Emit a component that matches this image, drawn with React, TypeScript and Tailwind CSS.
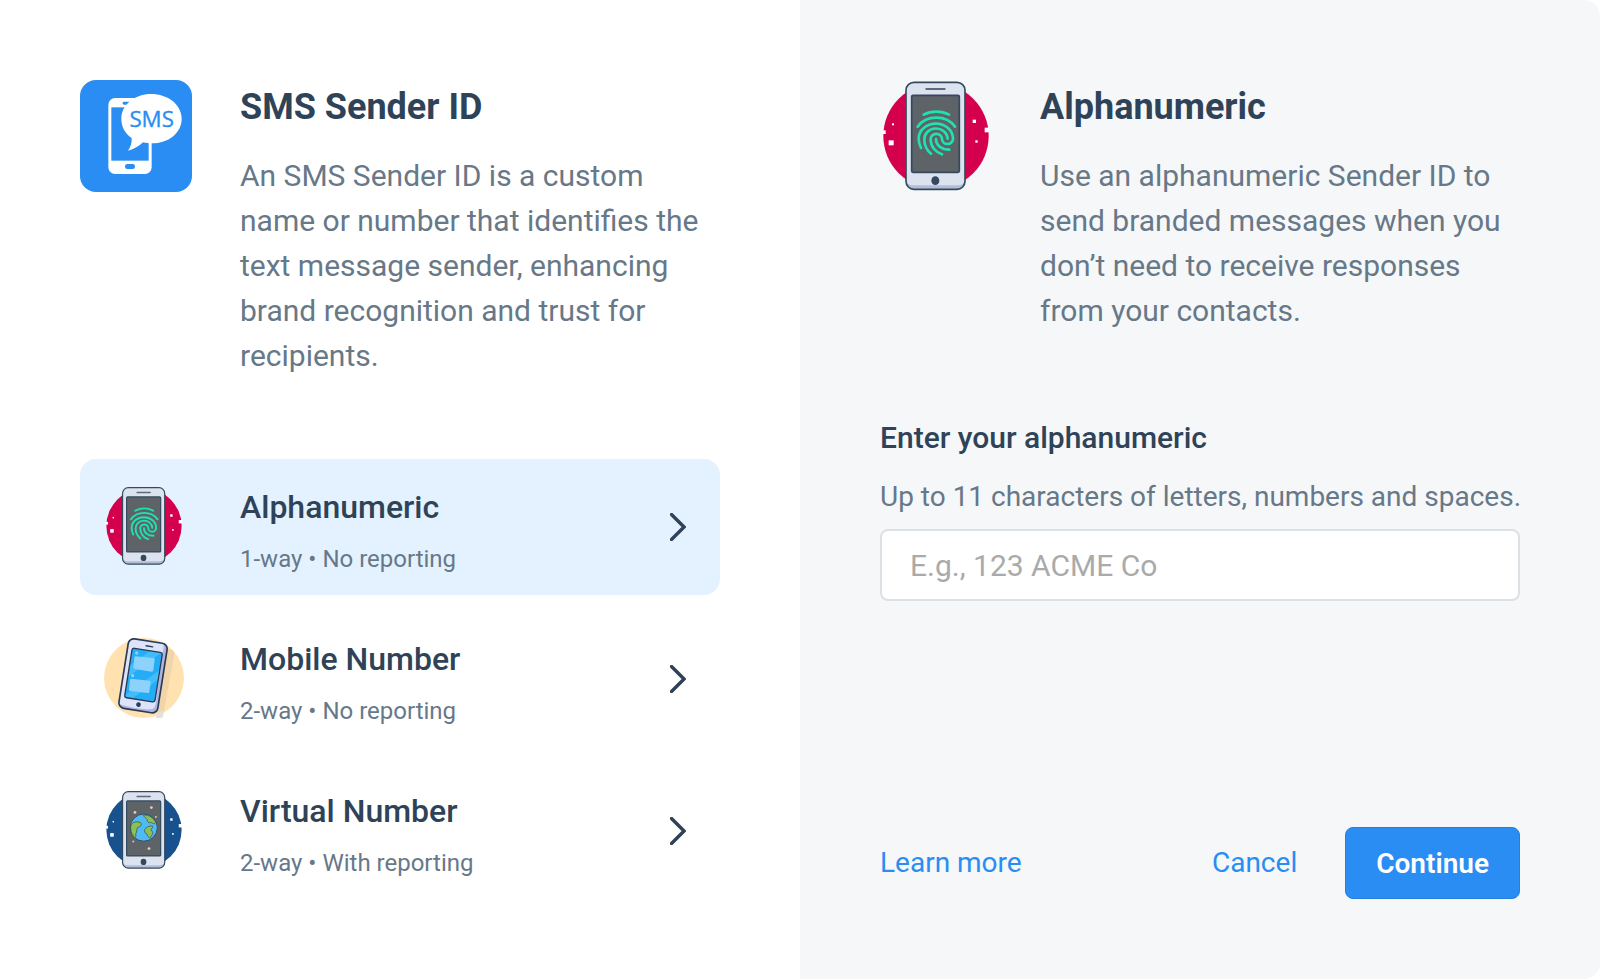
import React, { useState } from "react";

interface SenderType {
  id: string;
  title: string;
  details: string;
  Icon: React.ComponentType<{ className?: string }>;
}

interface IconProps {
  className?: string;
}

const SmsIcon = ({ className }: IconProps) => (
  <svg viewBox="30 30 336 336" className={className} aria-hidden="true">
    <rect x="30" y="30" width="336" height="336" rx="48" fill="#298df3" />
    <rect x="115" y="84" width="130" height="228" rx="20" fill="#fff" />
    <rect x="124" y="112" width="112" height="160" fill="#298df3" />
    <rect x="158" y="95" width="44" height="9" rx="4" fill="#298df3" />
    <rect x="165" y="282" width="30" height="15" rx="7" fill="#298df3" />
    <path
      d="M243 72C294 72 335 104 335 146C335 189 295 220 246 220C236 220 228 219 219 217C207 229 192 237 174 242C182 230 186 219 185 204C165 191 154 170 154 147C154 104 194 72 243 72Z"
      fill="#fff"
    />
    <text
      x="245"
      y="171"
      textAnchor="middle"
      fontSize="67"
      fill="#298df3"
      stroke="#298df3"
      strokeWidth="1"
      className="font-['Open_Sans',sans-serif]"
    >
      SMS
    </text>
  </svg>
);

const PhoneFrame = ({
  color,
  className,
  children,
}: IconProps & { color: string; children: React.ReactNode }) => (
  <svg viewBox="30 30 336 336" className={className} aria-hidden="true">
    <circle cx="198" cy="198" r="158" fill={color} />
    <g fill="#fff">
      <rect x="36" y="181" width="11" height="11" />
      <rect x="66" y="160" width="6" height="6" />
      <rect x="56" y="211" width="15" height="15" />
      <rect x="308" y="149" width="10" height="10" />
      <rect x="344" y="173" width="14" height="14" />
      <rect x="316" y="211" width="7" height="7" />
    </g>
    <rect x="108" y="37" width="177" height="321" rx="24" fill="#dce3ef" />
    <path
      d="M108 328C108 340 118 346 132 346H261C275 346 285 340 285 328V334C285 348 275 358 261 358H132C118 358 108 348 108 334Z"
      fill="#b4bdd8"
    />
    <rect
      x="108"
      y="37"
      width="177"
      height="321"
      rx="24"
      fill="none"
      stroke="#34495e"
      strokeWidth="5"
    />
    <path d="M169 57H224" stroke="#5d6a7c" strokeWidth="6" strokeLinecap="round" />
    <rect
      x="125"
      y="76"
      width="143"
      height="231"
      rx="4"
      fill="#5e6368"
      stroke="#34495e"
      strokeWidth="5"
    />
    <ellipse cx="196" cy="332" rx="12" ry="13" fill="#34495e" />
    {children}
  </svg>
);

const AlphanumericIcon = ({ className }: IconProps) => (
  <PhoneFrame color="#d5004d" className={className}>
    <g fill="none" stroke="#20e2b0" strokeWidth="8" strokeLinecap="round">
      <path d="M161 134C184 122 214 122 237 134" />
      <path d="M143 170C169 134 229 134 255 170" />
      <path d="M153 234C148 223 146 214 146 206A51.5 45 0 0 1 249 206A16.5 16 0 0 1 216 206A17 16 0 0 0 182 209C182 230 198 248 216 253" />
      <path d="M183 251C168 238 163 224 163 209A35 32 0 0 1 233 206" />
      <path d="M198 207C198 226 215 239 238 239" />
    </g>
  </PhoneFrame>
);

const VirtualNumberIcon = ({ className }: IconProps) => (
  <PhoneFrame color="#17528f" className={className}>
    <circle cx="197" cy="188" r="57" fill="#4fbaf5" stroke="#34495e" strokeWidth="4" />
    <g fill="#8cc152" stroke="#34495e" strokeWidth="3" strokeLinejoin="round">
      <path d="M143 178C150 164 168 160 183 167C191 174 185 185 172 187C164 194 171 206 163 214C166 226 161 233 156 228C144 214 140 196 143 178Z" />
      <path d="M196 135C217 133 240 148 247 166C242 175 234 171 228 166C218 170 208 163 213 155C208 148 198 145 196 135Z" />
      <path d="M200 200C204 186 220 179 235 182C236 189 226 193 228 200C239 204 235 220 222 232C211 228 214 212 202 209Z" />
    </g>
    <g fill="#d9cfc6">
      <circle cx="160" cy="124" r="6" />
      <circle cx="229" cy="104" r="6" />
      <circle cx="248" cy="143" r="4" />
      <circle cx="153" cy="246" r="4" />
      <circle cx="219" cy="276" r="6" />
    </g>
  </PhoneFrame>
);

const MobileNumberIcon = ({ className }: IconProps) => (
  <svg viewBox="27 39 240 240" className={className} aria-hidden="true">
    <circle cx="147" cy="159" r="120" fill="#ffe2af" />
    <path d="M216 70L232 76C238 78 239 83 238 88L207 258L190 262L100 256Z" fill="#f0d5aa" />
    <path d="M188 262L207 258L204 274C203 277 201 279 198 279H182Z" fill="#e4e0dc" />
    <g transform="rotate(9 144 153)">
      <rect x="85" y="47" width="118" height="211" rx="17" fill="#dde4fa" />
      <path
        d="M191 49C198 52 203 57 203 64V241C203 252 196 258 186 258H102C94 258 88 254 86 247C119 252 161 252 183 248C192 246 195 238 195 228Z"
        fill="#aeb6df"
      />
      <rect
        x="85"
        y="47"
        width="118"
        height="211"
        rx="17"
        fill="none"
        stroke="#2b3a55"
        strokeWidth="5"
      />
      <rect x="99" y="75" width="92" height="150" rx="7" fill="#25acf7" />
      <path d="M99 130L154 75H188L99 164Z" fill="#42bdfa" />
      <path d="M99 219L191 127V157L123 225H99Z" fill="#42bdfa" />
      <rect
        x="99"
        y="75"
        width="92"
        height="150"
        rx="7"
        fill="none"
        stroke="#2b3a55"
        strokeWidth="4"
      />
      <path d="M139 62H159" stroke="#2b3a55" strokeWidth="4" strokeLinecap="round" />
      <circle cx="144" cy="240" r="7" fill="#2b3a55" />
    </g>
    <g fill="#8cd2fa">
      <path d="M121 94L175 99C178 99 179 101 179 104L175 136C175 139 173 140 170 140L119 132C116 132 115 130 115 127L118 97Z" />
      <path d="M108 161L163 167C166 167 168 169 167 172L163 200C163 203 161 204 158 204L106 198C103 198 102 196 102 193L105 164Z" />
      <circle cx="125" cy="84" r="5" />
      <circle cx="113" cy="152" r="5" />
    </g>
  </svg>
);

const ChevronIcon = ({ className }: IconProps) => (
  <svg viewBox="0 0 16 28" className={className} aria-hidden="true">
    <path
      d="M1.5 1.5L14 14L1.5 26.5"
      fill="none"
      stroke="#2f4358"
      strokeWidth="3.4"
      strokeLinecap="round"
    />
  </svg>
);

const senderTypes: SenderType[] = [
  {
    id: "alphanumeric",
    title: "Alphanumeric",
    details: "1-way • No reporting",
    Icon: AlphanumericIcon,
  },
  {
    id: "mobile",
    title: "Mobile Number",
    details: "2-way • No reporting",
    Icon: MobileNumberIcon,
  },
  {
    id: "virtual",
    title: "Virtual Number",
    details: "2-way • With reporting",
    Icon: VirtualNumberIcon,
  },
];

const PanelHeader = ({
  icon,
  title,
  children,
}: {
  icon: React.ReactNode;
  title: string;
  children: React.ReactNode;
}) => (
  <header className="flex items-start gap-12">
    {icon}
    <div className="min-w-0 flex-1">
      <h2 className="text-[36px] leading-[54px] font-bold text-[#2f4358]">{title}</h2>
      <p className="mt-[19px] pb-px text-[30px] leading-[45px] text-[#677888]">{children}</p>
    </div>
  </header>
);

const App = () => {
  const [selected, setSelected] = useState<string>("alphanumeric");
  const [senderId, setSenderId] = useState<string>("");

  return (
    <main className="grid min-h-screen grid-cols-2 bg-white font-[Roboto,sans-serif]">
      <section className="p-20">
        <PanelHeader icon={<SmsIcon className="size-28 shrink-0" />} title="SMS Sender ID">
          An SMS Sender ID is a custom name or number that identifies the text message sender,
          enhancing brand recognition and trust for recipients.
        </PanelHeader>
        <div className="mt-20 flex flex-col gap-4">
          {senderTypes.map(({ id, title, details, Icon }) => (
            <button
              key={id}
              type="button"
              aria-pressed={selected === id}
              onClick={() => setSelected(id)}
              className={`flex h-[136px] w-full items-center rounded-2xl pr-[34px] pl-6 text-left ${
                selected === id ? "bg-[#e4f2ff]" : "bg-transparent"
              }`}
            >
              <Icon className="mb-0.5 size-20 shrink-0" />
              <span className="ml-14 flex flex-1 flex-col gap-4 pt-[7px]">
                <span className="text-[32px] leading-[40px] font-medium text-[#2f4358]">
                  {title}
                </span>
                <span className="text-2xl text-[#677888]">{details}</span>
              </span>
              <ChevronIcon className="h-7 w-4 shrink-0" />
            </button>
          ))}
        </div>
      </section>

      <section className="mb-px flex flex-col rounded-r-2xl bg-[#f5f7f9] p-20">
        <PanelHeader
          icon={<AlphanumericIcon className="size-28 shrink-0" />}
          title="Alphanumeric"
        >
          Use an alphanumeric Sender ID to send branded messages when you don’t need to receive
          responses from your contacts.
        </PanelHeader>
        <form
          className="flex flex-1 flex-col pt-20"
          onSubmit={(e) => e.preventDefault()}
        >
          <label
            htmlFor="sender-id"
            className="text-[30px] leading-[47px] font-medium text-[#2f4358]"
          >
            Enter your alphanumeric
          </label>
          <p
            id="sender-id-hint"
            className="mt-4 text-[28px] leading-[40px] whitespace-nowrap text-[#677888]"
          >
            Up to 11 characters of letters, numbers and spaces.
          </p>
          <input
            id="sender-id"
            type="text"
            maxLength={11}
            aria-describedby="sender-id-hint"
            placeholder="E.g., 123 ACME Co"
            value={senderId}
            onChange={(e) => setSenderId(e.target.value)}
            className="mt-3 h-[72px] w-full rounded-lg border-2 border-[#dce1e6] bg-white px-7 text-[30px] text-[#2f4358] placeholder:text-[#aaaaaa]"
          />
          <div className="mt-auto flex items-center text-[28px] leading-[40px] text-[#298df3]">
            <a href="#learn-more">Learn more</a>
            <button type="button" className="ml-auto">
              Cancel
            </button>
            <button
              type="submit"
              className="ml-12 h-[72px] rounded-lg border border-[#257fdb] bg-[#298df3] px-[30px] pt-0.5 font-semibold text-white"
            >
              Continue
            </button>
          </div>
        </form>
      </section>
    </main>
  );
};

export default App;
